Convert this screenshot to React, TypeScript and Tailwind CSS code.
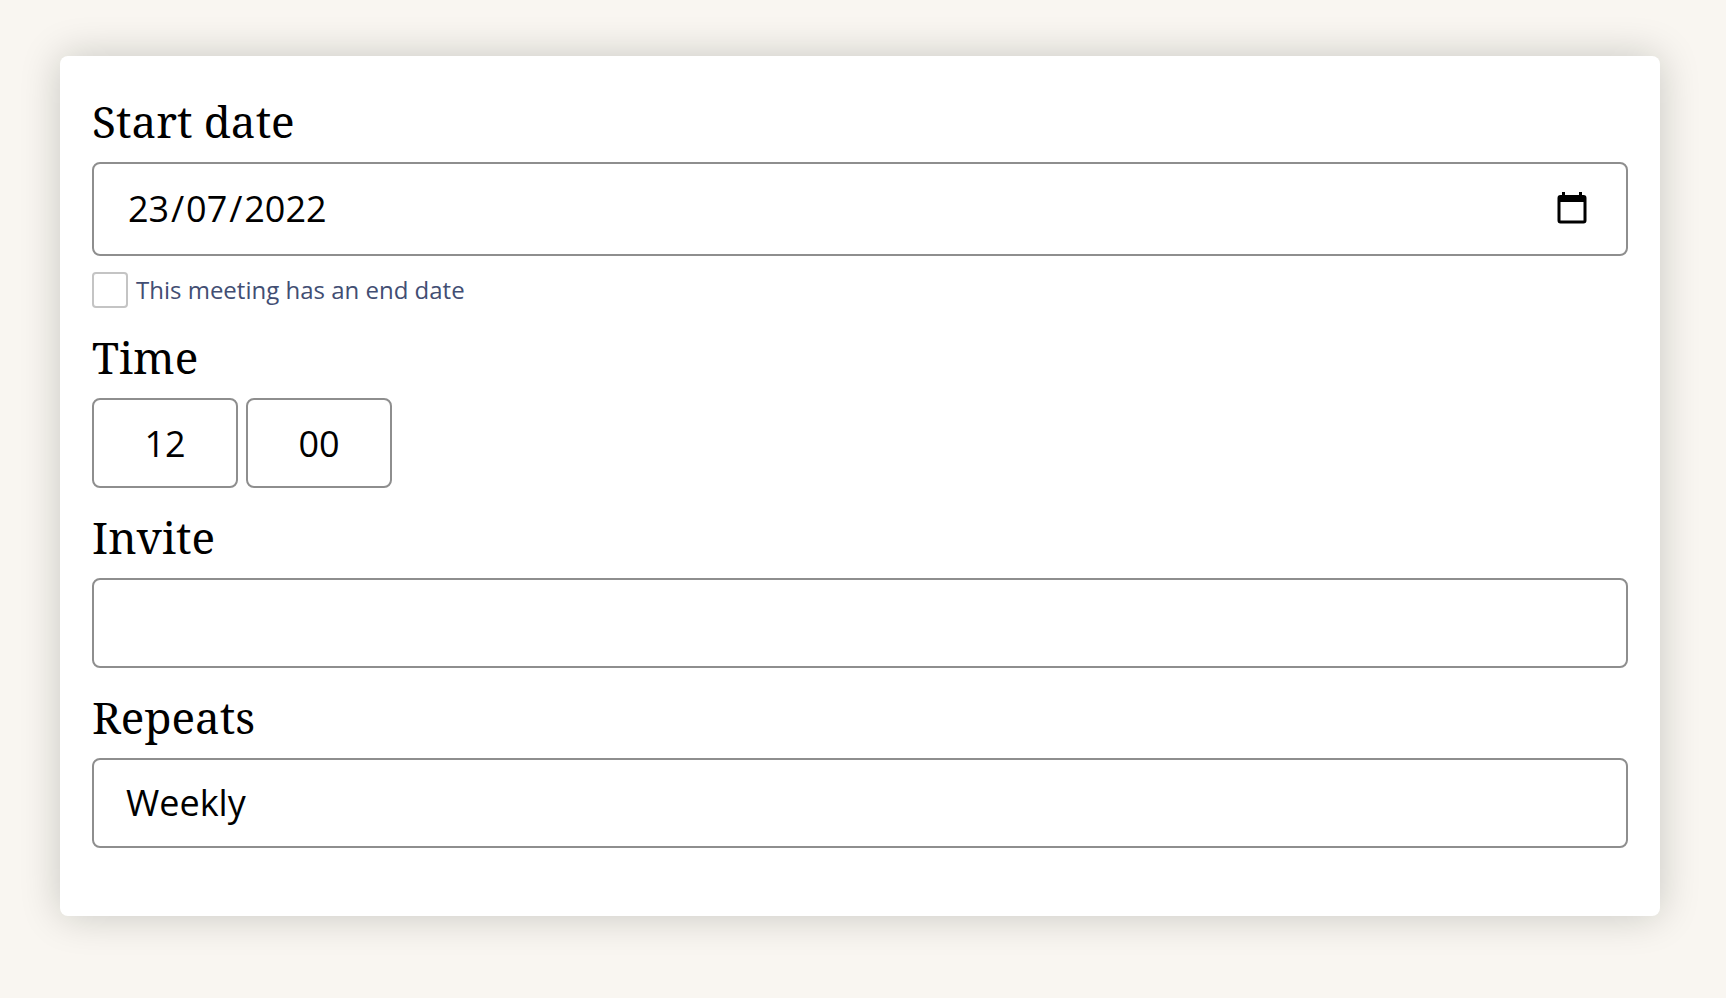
import { useState } from "react"

const boxStyle = "rounded-lg border-2 border-[#8e8e8e] bg-white text-4xl leading-[52px] text-black"
const headingStyle = "mb-3 block font-['Noto_Serif','Droid_Serif',serif] text-[44px] leading-[58px] text-black"
const partStyle = "bg-transparent text-center outline-none"

function CalendarIcon() {
    return (
        <svg viewBox="0 0 30 34" className="h-[34px] w-[30px]" aria-hidden="true">
            <path
                fill="currentColor"
                fillRule="evenodd"
                d="M5 0h3v3h14V0h3v3h1.500a3 3 0 0 1 3 3v22.500a3 3 0 0 1-3 3h-23a3 3 0 0 1-3-3V6a3 3 0 0 1 3-3H5ZM3.500 10v18.500h23V10Z"
            />
        </svg>
    )
}

export default function App() {

    const [day, setDay] = useState<string>('23')
    const [month, setMonth] = useState<string>('07')
    const [year, setYear] = useState<string>('2022')
    const [hasEndDate, setHasEndDate] = useState<boolean>(false)
    const [hours, setHours] = useState<string>('12')
    const [minutes, setMinutes] = useState<string>('00')
    const [invite, setInvite] = useState<string>('')
    const [repeats, setRepeats] = useState<string>('Weekly')

    return (
        <main className="min-h-screen bg-[#f9f6f1] px-[60px] pt-14 pb-20 font-['Open_Sans','Noto_Sans',sans-serif]">
            <form className="mr-[6px] rounded-lg bg-white px-8 pt-9 pb-[68px] shadow-[0_0_40px_rgba(10,20,10,0.2)]">
                <label htmlFor="day" className={headingStyle}>Start date</label>
                <div className={`flex h-[94px] items-center px-8 ${boxStyle}`}>
                    <input
                        id="day"
                        inputMode="numeric"
                        maxLength={2}
                        value={day}
                        onChange={(e) => setDay(e.target.value)}
                        className={`w-[45px] ${partStyle}`}
                    />
                    <span>/</span>
                    <input
                        aria-label="Month"
                        inputMode="numeric"
                        maxLength={2}
                        value={month}
                        onChange={(e) => setMonth(e.target.value)}
                        className={`w-[45px] ${partStyle}`}
                    />
                    <span>/</span>
                    <input
                        aria-label="Year"
                        inputMode="numeric"
                        maxLength={4}
                        value={year}
                        onChange={(e) => setYear(e.target.value)}
                        className={`w-[86px] ${partStyle}`}
                    />
                    <button type="button" aria-label="Open calendar" className="ml-auto px-[7px]">
                        <CalendarIcon />
                    </button>
                </div>

                <div className="mt-4 mb-5 flex items-center gap-2">
                    <input
                        id="has-end-date"
                        type="checkbox"
                        checked={hasEndDate}
                        onChange={(e) => setHasEndDate(e.target.checked)}
                        className="size-9 appearance-none rounded-sm border-2 border-[#c4c4c4] bg-white checked:bg-[#424e73]"
                    />
                    <label htmlFor="has-end-date" className="text-2xl text-[#424e73]">
                        This meeting has an end date
                    </label>
                </div>

                <label htmlFor="hours" className={headingStyle}>Time</label>
                <div className="mb-5 flex gap-2">
                    <input
                        id="hours"
                        inputMode="numeric"
                        maxLength={2}
                        value={hours}
                        onChange={(e) => setHours(e.target.value)}
                        className={`h-[90px] w-[146px] text-center ${boxStyle}`}
                    />
                    <input
                        aria-label="Minutes"
                        inputMode="numeric"
                        maxLength={2}
                        value={minutes}
                        onChange={(e) => setMinutes(e.target.value)}
                        className={`h-[90px] w-[146px] text-center ${boxStyle}`}
                    />
                </div>

                <label htmlFor="invite" className={headingStyle}>Invite</label>
                <input
                    id="invite"
                    type="text"
                    value={invite}
                    onChange={(e) => setInvite(e.target.value)}
                    className={`mb-5 block h-[90px] w-full px-8 ${boxStyle}`}
                />

                <label htmlFor="repeats" className={headingStyle}>Repeats</label>
                <select
                    id="repeats"
                    value={repeats}
                    onChange={(e) => setRepeats(e.target.value)}
                    className={`block h-[90px] w-full appearance-none px-8 ${boxStyle}`}
                >
                    <option>Never</option>
                    <option>Daily</option>
                    <option>Weekly</option>
                    <option>Monthly</option>
                </select>
            </form>
        </main>
    )
}
